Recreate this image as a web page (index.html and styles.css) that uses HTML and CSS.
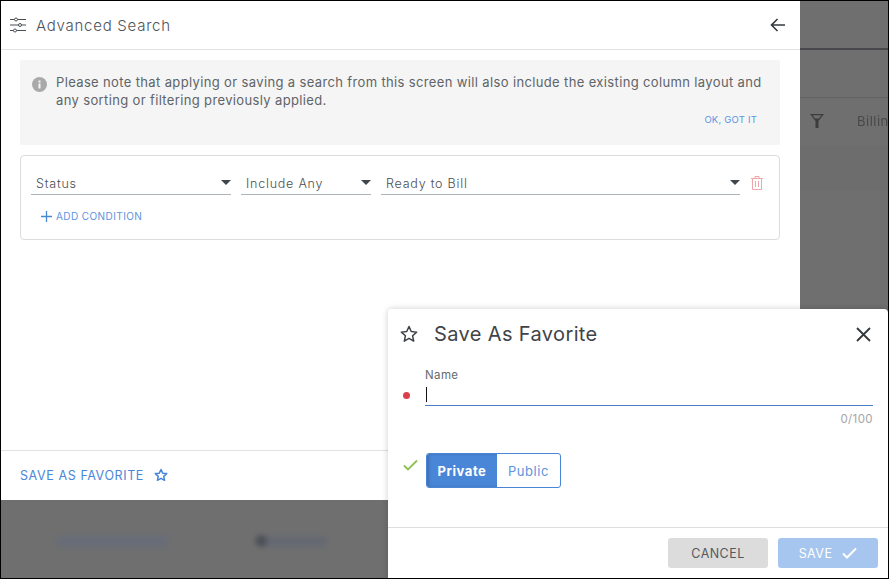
FILE: index.html
```html
<!DOCTYPE html>
<html lang="en">
<head>
<meta charset="utf-8">
<title>Advanced Search</title>
<link rel="stylesheet" href="styles.css">
</head>
<body>
<div class="screen">
  <div class="backdrop">
    <div class="bg-line bg-line-1"></div>
    <div class="bg-line bg-line-2"></div>
    <div class="bg-band"></div>
    <div class="bg-filter">
      <svg width="16" height="16" viewBox="0 0 16 16"><path d="M1 1h14L9.500 8v7h-3V8z" fill="#3d3d3d"/><path d="M3.500 2.200h9L9.800 5.500H6.200z" fill="#6f6f6f"/></svg>
      <span>Billin</span>
    </div>
    <div class="bg-blur bg-blur-1"></div>
    <div class="bg-blur bg-blur-2"></div>
    <div class="bg-dot"></div>
  </div>

  <section class="panel">
    <header class="panel-head">
      <svg class="head-icon" width="17" height="16" viewBox="0 0 17 16" fill="none" stroke="#4a4f54" stroke-width="1">
        <path d="M0 2.500h4.500M7.500 2.500H16M0 8h8.500M11.500 8H16M0 13.500h3.500M6.500 13.500H16"/>
        <circle cx="6" cy="2.500" r="1.500"/><circle cx="10" cy="8" r="1.500"/><circle cx="5" cy="13.500" r="1.500"/>
      </svg>
      <h1 class="panel-title">Advanced Search</h1>
      <svg class="back" width="16" height="14" viewBox="0 0 16 14" fill="none" stroke="#33383d" stroke-width="1.600"><path d="M15 7H1.500M7.500 1 1.500 7l6 6"/></svg>
    </header>
    <div class="panel-body">
      <div class="notice">
        <div class="notice-row">
          <svg class="info" width="15" height="15" viewBox="0 0 15 15"><circle cx="7.500" cy="7.500" r="7.500" fill="#a9a9a9"/><rect x="6.500" y="6.500" width="2" height="5" fill="#f5f5f5"/><rect x="6.500" y="3.500" width="2" height="2" fill="#f5f5f5"/></svg>
          <p>Please note that applying or saving a search from this screen will also include the existing column layout and any sorting or filtering previously applied.</p>
        </div>
        <div class="notice-action">OK, GOT IT</div>
      </div>
      <div class="conditions">
        <div class="cond-row">
          <div class="select sel-status"><span>Status</span><i class="caret"></i></div>
          <div class="select sel-op"><span>Include Any</span><i class="caret"></i></div>
          <div class="select sel-val"><span>Ready to Bill</span><i class="caret"></i></div>
          <svg class="trash" width="12" height="14" viewBox="0 0 12 14" fill="none" stroke="#f0a5ab" stroke-width="1"><path d="M0 2.500h12M4 2.500V.5h4v2M1.500 2.500v11h9v-11M4.500 5v6M7.500 5v6"/></svg>
        </div>
        <div class="add-cond">
          <svg width="11" height="11" viewBox="0 0 11 11" stroke="#4a86d8" stroke-width="1.300"><path d="M5.500 0v11M0 5.500h11"/></svg>
          <span>ADD CONDITION</span>
        </div>
      </div>
    </div>
    <footer class="panel-foot">
      <span>SAVE AS FAVORITE</span>
      <svg width="14" height="14" viewBox="0 0 24 24" fill="none" stroke="#4a86d8" stroke-width="2.600" stroke-linejoin="round"><path d="M12 2.500l2.900 6.300 6.900.8-5.100 4.700 1.400 6.800-6.100-3.400-6.100 3.400 1.400-6.800-5.100-4.700 6.900-.8z"/></svg>
    </footer>
  </section>

  <section class="dialog">
    <header class="dlg-head">
      <svg class="dlg-star" width="18" height="18" viewBox="0 0 24 24" fill="none" stroke="#3c4247" stroke-width="2" stroke-linejoin="round"><path d="M12 2l3 6.700 7.200.8-5.400 4.900 1.500 7.100-6.300-3.600-6.300 3.600 1.500-7.100L1.800 9.500 9 8.700z"/></svg>
      <h2>Save As Favorite</h2>
      <svg class="close" width="15" height="15" viewBox="0 0 15 15" stroke="#33383d" stroke-width="1.800"><path d="M1 1l13 13M14 1 1 14"/></svg>
    </header>
    <div class="dlg-body">
      <div class="field-row">
        <i class="dot"></i>
        <div class="field">
          <label>Name</label>
          <div class="input"><i class="cursor"></i></div>
          <div class="count">0/100</div>
        </div>
      </div>
      <div class="vis-row">
        <svg class="ok" width="15" height="12" viewBox="0 0 15 12" fill="none" stroke="#8cc152" stroke-width="1.800"><path d="M1 6.500 5 10.500 14 1.500"/></svg>
        <div class="toggle"><span class="on">Private</span><span class="off">Public</span></div>
      </div>
    </div>
    <footer class="dlg-foot">
      <div class="btn cancel">CANCEL</div>
      <div class="btn save"><span>SAVE</span><svg width="15" height="12" viewBox="0 0 15 12" fill="none" stroke="#fff" stroke-width="2"><path d="M1 6.500 5 10.500 14 1.500"/></svg></div>
    </footer>
  </section>
</div>
</body>
</html>
```
FILE: styles.css
```css
* { box-sizing: border-box; }
html, body { margin: 0; padding: 0; }
body { width: 889px; height: 579px; overflow: hidden; background: #000; font-family: "Inter", "Liberation Sans", sans-serif; }
.screen { position: relative; width: 889px; height: 579px; border: 1px solid #000; overflow: hidden; }
.backdrop { position: absolute; inset: 0; background: #6f6f6f; }
.bg-line { position: absolute; height: 1px; }
.bg-line-1 { left: 799px; right: 0; top: 47px; height: 2px; background: #48484c; }
.bg-line-2 { left: 799px; right: 0; top: 96px; background: #626262; }
.bg-band { position: absolute; left: 799px; right: 0; top: 144px; height: 46px; background: #6d6d6d; }
.bg-filter { position: absolute; left: 808px; top: 112px; display: flex; align-items: center; gap: 32px; font-size: 13px; color: #484848; letter-spacing: .5px; white-space: nowrap; filter: blur(.4px); }
.bg-blur { position: absolute; height: 9px; filter: blur(3px); opacity: .45; }
.bg-blur-1 { left: 56px; top: 536px; width: 110px; background: #5a6888; }
.bg-blur-2 { left: 262px; top: 536px; width: 63px; background: #555f78; }
.bg-dot { position: absolute; left: 254px; top: 534px; width: 12px; height: 12px; border-radius: 50%; background: #3a3f48; filter: blur(2.500px); opacity: .6; }

.panel { position: absolute; left: 0; top: 0; width: 799px; height: 499px; background: #fff; display: flex; flex-direction: column; }
.panel-head { height: 49px; flex: none; display: flex; align-items: center; padding: 0 14px 0 9px; border-bottom: 1px solid #e2e2e2; }
.head-icon { flex: none; }
.panel-title { margin: 0 0 0 9px; flex: 1; font-size: 15px; font-weight: 300; color: #4d5257; letter-spacing: .74px; }
.back { flex: none; }
.panel-body { flex: 1; padding: 10px 20px 0 19px; }
.notice { height: 85px; background: #f5f5f5; border-radius: 2px; padding: 14px 13px 0 12px; display: flex; flex-direction: column; }
.notice-row { display: flex; gap: 10px; }
.info { flex: none; margin-top: 3px; }
.notice p { margin: -1px 0 0 -1px; font-size: 13px; line-height: 18px; color: #606468; letter-spacing: .36px; }
.notice-action { margin-top: 5px; text-align: right; padding-right: 10px; font-size: 9.500px; color: #5c94e0; letter-spacing: .2px; }
.conditions { margin-top: 10px; height: 85px; border: 1px solid #dcdcdc; border-radius: 4px; padding: 12px 10px 0; }
.cond-row { display: flex; gap: 10px; align-items: flex-start; }
.select { height: 27px; border-bottom: 1px solid #aab4ba; display: flex; align-items: center; justify-content: space-between; padding: 5px 0 0 5px; font-size: 12.500px; font-weight: 300; color: #4a4e52; letter-spacing: .78px; }
.sel-status { width: 200px; }
.sel-op { width: 130px; }
.sel-val { width: 359px; }
.caret { width: 0; height: 0; margin-top: -2px; border-left: 5px solid transparent; border-right: 5px solid transparent; border-top: 5px solid #3f464c; }
.trash { flex: none; margin: 8px 0 0 1px; }
.add-cond { margin: 15px 0 0 10px; display: flex; align-items: center; gap: 4px; font-size: 10px; color: #5c94e0; letter-spacing: .42px; }
.panel-foot { height: 50px; flex: none; border-top: 1px solid #e2e2e2; display: flex; align-items: center; gap: 10px; padding: 0 0 1px 19px; font-size: 12.500px; color: #4a86d8; letter-spacing: .6px; }

.dialog { position: absolute; left: 387px; top: 308px; width: 500px; height: 269px; background: #fff; border-radius: 4px 4px 0 0; box-shadow: 0 0 6px rgba(0,0,0,.2); display: flex; flex-direction: column; }
.dlg-head { height: 50px; flex: none; display: flex; align-items: center; padding: 0 17px 0 12px; }
.dlg-star { flex: none; }
.dlg-head h2 { margin: 0 0 0 16px; flex: 1; font-size: 20px; font-weight: 400; color: #3f4449; letter-spacing: .37px; }
.close { flex: none; }
.dlg-body { flex: 1; }
.field-row { display: flex; align-items: flex-start; padding: 9px 15px 0 15px; }
.dot { flex: none; width: 7px; height: 7px; border-radius: 50%; background: #dc3f4c; margin: 24px 15px 0 0; }
.field { flex: 1; min-width: 0; }
.field label { display: block; font-size: 11.500px; line-height: 14px; color: #666b70; letter-spacing: .38px; }
.input { height: 24px; border-bottom: 1px solid #4a7fc5; padding-top: 5px; }
.cursor { display: block; width: 1px; height: 15px; background: #111; margin-left: 1px; }
.count { margin-top: 6px; text-align: right; font-size: 11.500px; line-height: 14px; color: #a5a5a5; letter-spacing: .4px; }
.vis-row { display: flex; align-items: flex-start; gap: 8px; margin-top: 27px; padding-left: 15px; }
.ok { flex: none; margin-top: 6px; }
.toggle { display: flex; width: 135px; height: 35px; border: 1px solid #4a86d8; border-radius: 3px; overflow: hidden; font-size: 13px; letter-spacing: .55px; }
.toggle span { display: flex; align-items: center; justify-content: center; }
.on { width: 70px; background: #4a86d8; color: #fff; font-weight: 700; box-shadow: inset 2px 0 3px rgba(0,0,0,.18); }
.off { flex: 1; color: #5c94e0; }
.dlg-foot { height: 51px; flex: none; border-top: 1px solid #dedede; display: flex; justify-content: flex-end; gap: 10px; padding: 10px 10px 0 0; }
.btn { width: 100px; height: 30px; border-radius: 3px; display: flex; align-items: center; justify-content: center; font-size: 12.500px; letter-spacing: .45px; }
.cancel { background: #dcdcdc; color: #55595d; }
.save { background: #a6c6ef; color: #fff; gap: 10px; }
```
